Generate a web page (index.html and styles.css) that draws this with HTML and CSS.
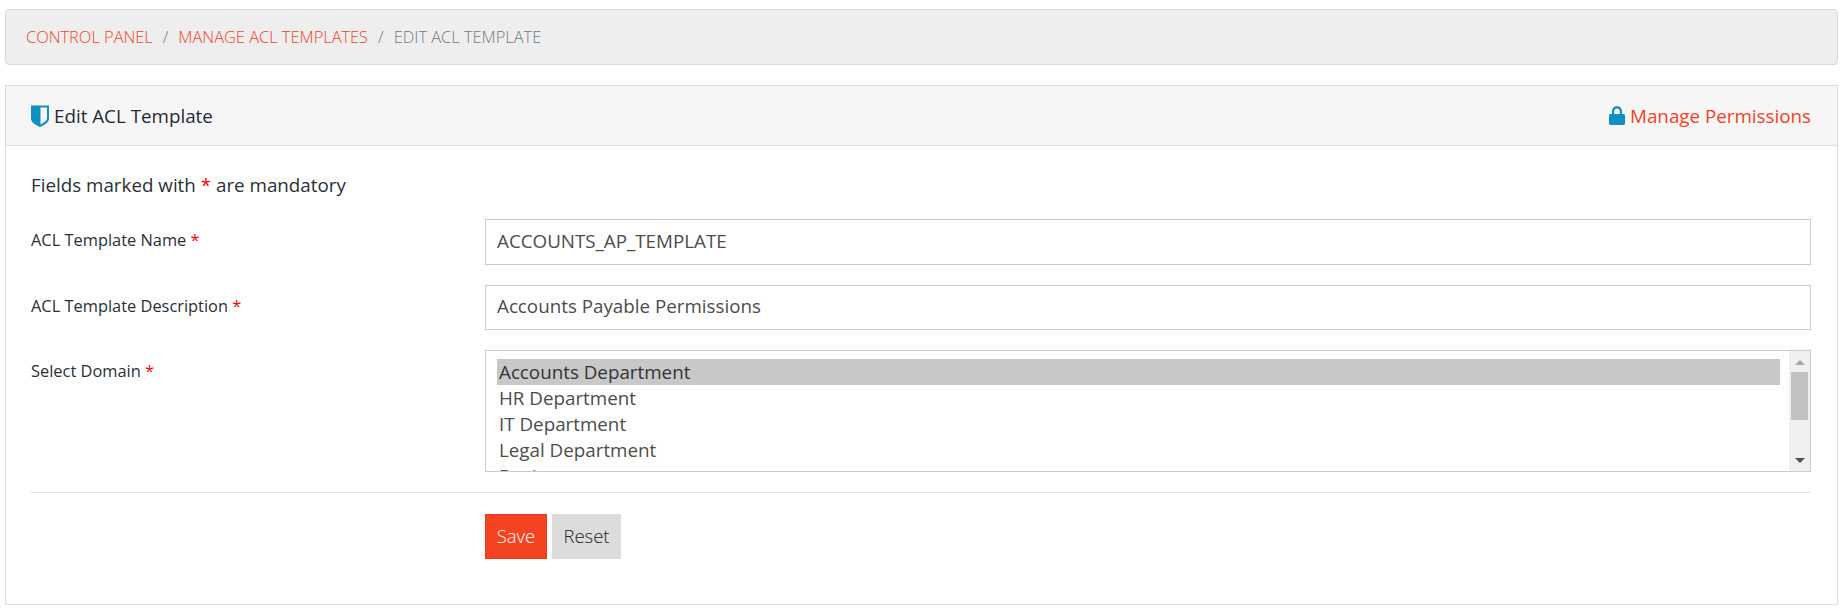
FILE: index.html
```html
<!DOCTYPE html>
<html lang="en">
<head>
<meta charset="utf-8">
<title>Edit ACL Template</title>
<link rel="stylesheet" href="styles.css">
</head>
<body>
<nav class="breadcrumb">
  <a class="crumb-link">Control Panel</a><span class="sep">/</span><a class="crumb-link">Manage ACL Templates</a><span class="sep">/</span><span class="crumb-current">Edit ACL Template</span>
</nav>
<section class="panel">
  <header class="panel-head">
    <h1 class="panel-title">
      <svg class="shield" viewBox="0 0 18 22" aria-hidden="true"><path fill="#0f8fc2" d="M0 0.500h18v13c0 3.800-4.500 6.500-9 8.500-4.500-2-9-4.700-9-8.500z"/><path fill="#f5f5f5" d="M9.500 2.500h6.500v10.500c0 2.700-3 4.700-6.500 6.500z"/></svg>
      Edit ACL Template
    </h1>
    <a class="manage">
      <svg class="lock" viewBox="0 0 16 19" aria-hidden="true"><path fill="#0f8fc2" d="M1.500 8H3V5.200C3 2.300 5.200 0.300 8 0.300s5 2 5 4.900V8h1.500c.8 0 1.500.7 1.500 1.500v8c0 .8-.7 1.500-1.500 1.500h-13C.7 19 0 18.300 0 17.500v-8C0 8.700.7 8 1.500 8zM5.200 8h5.600V5.200c0-1.700-1.200-2.800-2.800-2.800S5.200 3.500 5.200 5.200z"/></svg>
      Manage Permissions
    </a>
  </header>
  <div class="panel-body">
    <p class="note">Fields marked with <span class="req">*</span> are mandatory</p>
    <div class="row">
      <label class="label">ACL Template Name <span class="req">*</span></label>
      <input class="field" type="text" value="ACCOUNTS_AP_TEMPLATE">
    </div>
    <div class="row">
      <label class="label">ACL Template Description <span class="req">*</span></label>
      <input class="field" type="text" value="Accounts Payable Permissions">
    </div>
    <div class="row">
      <label class="label">Select Domain <span class="req">*</span></label>
      <div class="listbox">
        <ul class="options">
          <li class="option selected">Accounts Department</li>
          <li class="option">HR Department</li>
          <li class="option">IT Department</li>
          <li class="option">Legal Department</li>
          <li class="option">Design</li>
        </ul>
        <div class="scrollbar">
          <span class="arrow-up"></span>
          <span class="thumb"></span>
          <span class="arrow-down"></span>
        </div>
      </div>
    </div>
    <hr class="rule">
    <div class="actions">
      <button class="btn btn-save" type="button">Save</button>
      <button class="btn btn-reset" type="button">Reset</button>
    </div>
  </div>
</section>
</body>
</html>
```
FILE: styles.css
```css
* { box-sizing: border-box; }
html, body { margin: 0; padding: 0; }
body {
  background: #fff;
  color: #2a2f35;
  font-family: "Open Sans", sans-serif;
  padding: 9px 5px 5px;
  height: 610px;
  overflow: hidden;
}
.breadcrumb {
  height: 56px;
  background: #eeeeee;
  border: 1px solid #d8d8d8;
  border-radius: 4px;
  padding: 0 20px 2px;
  display: flex;
  align-items: center;
  font-size: 16.4px;
  font-weight: 300;
  text-transform: uppercase;
  white-space: nowrap;
}
.crumb-link { color: #f4411f; }
.crumb-current { color: #6f7a84; }
.sep { color: #777; margin: 0 10px; }
.panel {
  margin-top: 20px;
  height: 520px;
  border: 1px solid #dddddd;
}
.panel-head {
  height: 60px;
  background: #f6f6f6;
  border-bottom: 1px solid #dddddd;
  padding: 0 26px 0 25px;
  display: flex;
  align-items: center;
  justify-content: space-between;
}
.panel-title {
  margin: 0;
  font-size: 18.8px;
  font-weight: 400;
  color: #1f2a36;
  display: flex;
  align-items: center;
  gap: 5px;
}
.shield { width: 18px; height: 22px; }
.manage {
  color: #f4411f;
  font-size: 18.8px;
  display: flex;
  align-items: center;
  gap: 5px;
}
.lock { width: 16px; height: 19px; }
.panel-body { padding: 27px 26px 0 25px; }
.note {
  margin: 0 0 22px;
  font-size: 18.8px;
  line-height: 24px;
  color: #2a2f35;
}
.req { color: #f00; }
.row {
  display: flex;
  align-items: flex-start;
  margin-bottom: 20px;
}
.label {
  flex: 0 0 454px;
  font-size: 16.4px;
  line-height: 20px;
  padding-top: 11px;
  color: #2a2f35;
}
.field {
  flex: 1;
  height: 45.500px;
  border: 1px solid #cccccc;
  padding: 0 11px 2px;
  font: 18.8px "Open Sans", sans-serif;
  color: #4c4c4c;
  background: #fff;
  outline: none;
}
.listbox {
  flex: 1;
  height: 122px;
  border: 1px solid #cccccc;
  display: flex;
  overflow: hidden;
}
.options {
  flex: 1;
  list-style: none;
  margin: 0 9px 0 0;
  padding: 8px 0 0 11px;
  font-size: 18.8px;
  color: #4c4c4c;
  overflow: hidden;
}
.option { height: 26px; line-height: 26px; padding-left: 2px; white-space: nowrap; }
.selected { background: #c8c8c8; color: #333; }
.scrollbar {
  flex: 0 0 21px;
  background: #f0f0f0;
  display: flex;
  flex-direction: column;
  align-items: center;
}
.arrow-up {
  margin-top: 9px;
  border-left: 5px solid transparent;
  border-right: 5px solid transparent;
  border-bottom: 5px solid #a3a3a3;
}
.thumb {
  margin-top: 7px;
  width: 17px;
  height: 48px;
  background: #c1c1c1;
}
.arrow-down {
  margin-top: auto;
  margin-bottom: 8px;
  border-left: 5px solid transparent;
  border-right: 5px solid transparent;
  border-top: 5px solid #505050;
}
.rule {
  margin: 0 0 21px;
  border: 0;
  border-top: 1px solid #e2e2e2;
}
.actions {
  display: flex;
  gap: 5px;
  padding-left: 454px;
}
.btn {
  height: 45px;
  padding: 0 0 3px;
  font: 300 18.5px "Open Sans", sans-serif;
  border: 1px solid transparent;
}
.btn-save {
  width: 62px;
  background: #f44321;
  border-color: #f4311a;
  color: #fff;
}
.btn-reset {
  width: 69px;
  background: #dcdcdc;
  border-color: #dcdcdc;
  color: #222;
}
```
